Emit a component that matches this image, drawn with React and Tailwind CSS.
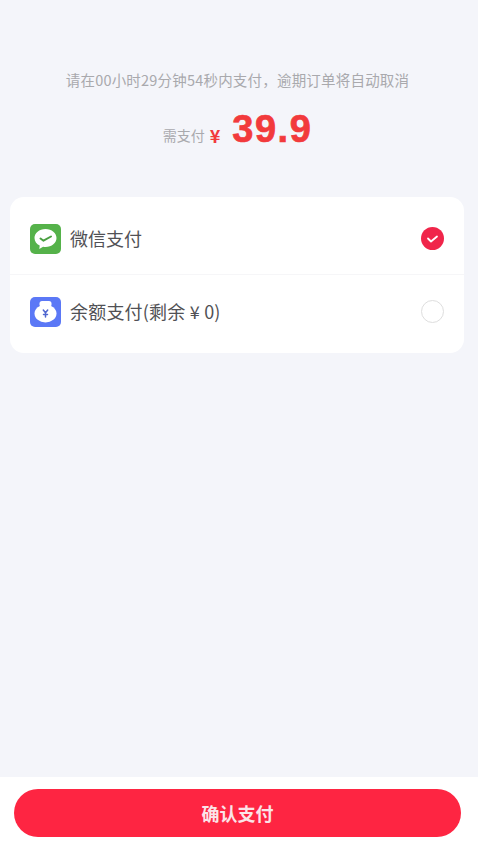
const fontStack = { fontFamily: '"Noto Sans CJK SC", Inter, sans-serif' };

function WechatIcon() {
  return (
    <svg viewBox="0 0 31 30" className="h-[30px] w-[31px]">
      <rect width="31" height="30" rx="5" fill="#55b24a" />
      <path
        d="M15.500 5C9.200 5 4.500 9 4.500 14c0 3.300 2 6 5.200 7.500L9.300 25l3.800-2.300c.8.100 1.600.2 2.400.2 6.300 0 11-3.900 11-8.900S21.800 5 15.500 5Z"
        fill="#fff"
      />
      <path d="M10.500 14.500l3 2.200 7.500-4.200" fill="none" stroke="#4a9f41" strokeWidth="2" strokeLinecap="round" strokeLinejoin="round" />
    </svg>
  );
}

function BalanceIcon() {
  return (
    <svg viewBox="0 0 31 30" className="h-[30px] w-[31px]">
      <rect width="31" height="30" rx="5" fill="#5b78f6" />
      <rect x="9.500" y="4" width="12" height="6" rx="2.500" fill="#fff" />
      <ellipse cx="15.500" cy="16.500" rx="11" ry="9" fill="#fff" />
      <path
        d="M13.300 13l2.200 2.800 2.200-2.800M15.500 15.800v4.200M13.500 17.500h4"
        fill="none"
        stroke="#4f66cf"
        strokeWidth="1.500"
        strokeLinecap="round"
        strokeLinejoin="round"
      />
    </svg>
  );
}

export default function App() {
  return (
    <div className="flex h-[850px] w-[478px] flex-col bg-[#f4f5fa]" style={fontStack}>
      <main className="min-h-0 flex-1 px-[10px] pt-[70px]">
        <p className="pr-[3px] text-center text-[14.5px] leading-[19px] tracking-[0.2px] text-[#a9a9ad]">
          请在00小时29分钟54秒内支付，逾期订单将自动取消
        </p>

        <div className="mt-[16px] flex h-[46px] items-end justify-center pr-[3px] pb-[3px]">
          <span className="mb-[3px] text-[14px] leading-[19px] text-[#a9a9ad]">需支付</span>
          <span className="mb-[3px] ml-[5px] text-[18px] leading-[20px] font-bold text-[#f23a3c]">¥</span>
          <span
            className="ml-[12px] text-[38px] leading-[38px] font-bold tracking-[1.5px] text-[#f23a3c] [-webkit-text-stroke:0.7px_#f23a3c]"
            style={{ fontFamily: '"Liberation Sans", sans-serif' }}
          >
            39.9
          </span>
        </div>

        <div className="mt-[46px] w-[454px] rounded-[14px] bg-white">
          <div className="flex h-[78px] items-center justify-between border-b border-[#f6f6f8] pt-[6px] pr-[20px] pl-[20px]">
            <div className="flex items-center gap-[9px]">
              <WechatIcon />
              <span className="text-[18px] text-[#515155]">微信支付</span>
            </div>
            <span className="flex h-[23px] w-[23px] items-center justify-center rounded-full bg-[#f0254a]">
              <svg viewBox="0 0 23 23" className="h-[23px] w-[23px]">
                <path d="M7 11.500l3 3 6-5" fill="none" stroke="#fff" strokeWidth="1.800" strokeLinecap="round" strokeLinejoin="round" />
              </svg>
            </span>
          </div>
          <div className="flex h-[78px] items-center justify-between pr-[20px] pb-[5px] pl-[20px]">
            <div className="flex items-center gap-[9px]">
              <BalanceIcon />
              <span className="text-[18px] tracking-[0.2px] text-[#515155]">余额支付(剩余 ¥ 0)</span>
            </div>
            <span className="h-[23px] w-[23px] rounded-full border border-[#dedede]" />
          </div>
        </div>
      </main>

      <footer className="h-[73px] bg-white px-[14px] pt-[12px]">
        <button
          type="button"
          className="h-[48px] w-[447px] rounded-full bg-[#fe2542] text-[18px] font-bold text-[#fbe4e8]"
        >
          确认支付
        </button>
      </footer>
    </div>
  );
}
